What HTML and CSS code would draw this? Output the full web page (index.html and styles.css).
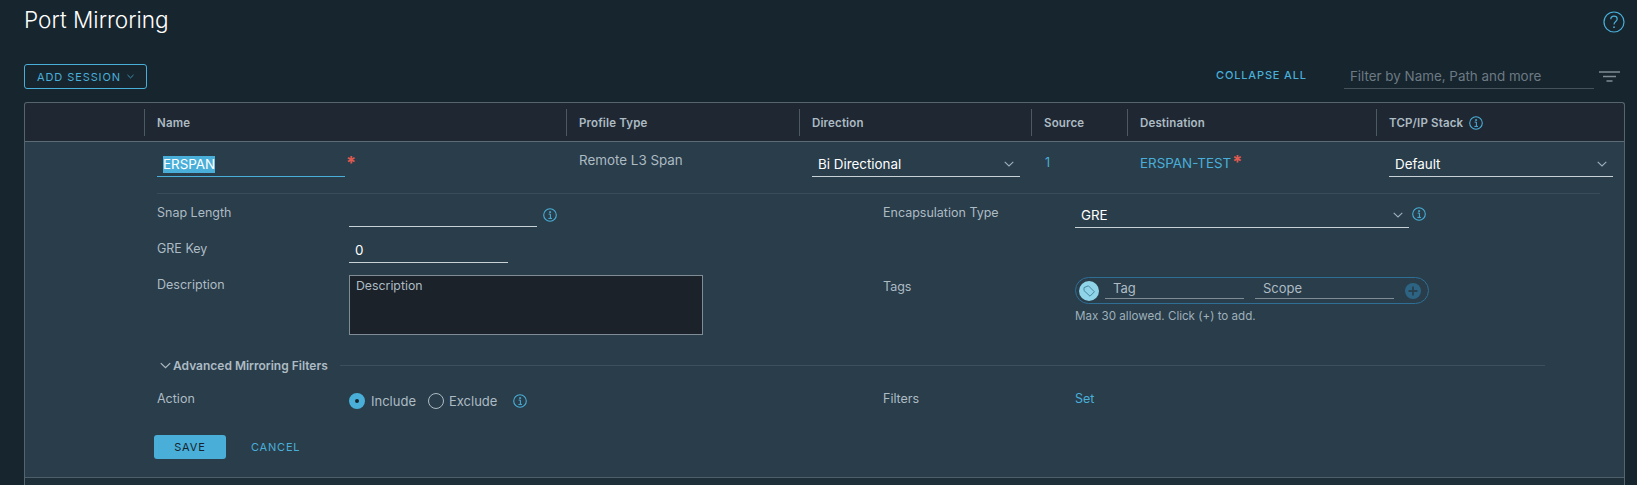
FILE: index.html
```html
<!DOCTYPE html>
<html lang="en">
<head>
    <meta charset="UTF-8">
    <meta name="viewport" content="width=device-width, initial-scale=1.0">
    <title>Port Mirroring</title>
    <link rel="stylesheet" href="styles.css">
</head>
<body>
    <svg class="defs" width="0" height="0">
        <symbol id="info" viewBox="0 0 14 14">
            <circle cx="7" cy="7" r="6.3" fill="none" stroke="currentColor" stroke-width="1.1"/>
            <path d="M5.6 6.1H7.4V10.2M5.4 10.4H9M6.6 3.6H7.6V4.6H6.6Z" fill="none" stroke="currentColor" stroke-width="1"/>
        </symbol>
        <symbol id="chev" viewBox="0 0 10 6">
            <path d="M0.7 0.8L5 5L9.3 0.8" fill="none" stroke="currentColor" stroke-width="1.1"/>
        </symbol>
    </svg>

    <div class="title-row">
        <h1>Port Mirroring</h1>
        <svg class="help" viewBox="0 0 22 22">
            <circle cx="11" cy="11" r="10" fill="none" stroke="currentColor" stroke-width="1.2"/>
            <path d="M7.8 8.3C7.8 6.3 9.3 5.2 11 5.2C12.8 5.2 14.2 6.4 14.2 8C14.2 10.4 11 10.6 11 13.4" fill="none" stroke="currentColor" stroke-width="1.2"/>
            <circle cx="11" cy="16.2" r="0.9" fill="currentColor"/>
        </svg>
    </div>

    <div class="toolbar">
        <button class="btn-outline" type="button">ADD SESSION <svg class="chev-sm"><use href="#chev"/></svg></button>
        <a class="collapse-all">COLLAPSE ALL</a>
        <input class="filter-input" type="text" placeholder="Filter by Name, Path and more">
        <svg class="filter-icon" viewBox="0 0 21 11">
            <path d="M0 1H21M4 5.5H17M7.5 10H13.5" fill="none" stroke="currentColor" stroke-width="1.4"/>
        </svg>
    </div>

    <div class="panel">
        <div class="cols head">
            <div></div>
            <div class="head-cell">Name</div>
            <div class="head-cell">Profile Type</div>
            <div class="head-cell">Direction</div>
            <div class="head-cell">Source</div>
            <div class="head-cell">Destination</div>
            <div class="head-cell">TCP/IP Stack <svg class="info head-info"><use href="#info"/></svg></div>
        </div>

        <div class="editor">
            <div class="cols row">
                <div></div>
                <div class="cell name-cell">
                    <div class="field name-field"><span class="selected">ERSPAN</span></div>
                    <span class="star">*</span>
                </div>
                <div class="cell profile-cell">Remote L3 Span</div>
                <div class="cell">
                    <div class="field direction-field">Bi Directional <svg class="chev"><use href="#chev"/></svg></div>
                </div>
                <div class="cell source-cell"><a>1</a></div>
                <div class="cell dest-cell"><a>ERSPAN-TEST</a><span class="star">*</span></div>
                <div class="cell">
                    <div class="field stack-field">Default <svg class="chev"><use href="#chev"/></svg></div>
                </div>
            </div>

            <div class="detail">
                <div class="form-grid">
                    <label class="lbl">Snap Length</label>
                    <div class="val">
                        <input class="field snap-input" type="text">
                        <svg class="info snap-info"><use href="#info"/></svg>
                    </div>
                    <label class="lbl">Encapsulation Type</label>
                    <div class="val">
                        <div class="field encap-field">GRE <svg class="chev"><use href="#chev"/></svg></div>
                        <svg class="info encap-info"><use href="#info"/></svg>
                    </div>

                    <label class="lbl">GRE Key</label>
                    <div class="val"><input class="field gre-input" type="text" value="0"></div>
                    <div></div>
                    <div></div>

                    <label class="lbl">Description</label>
                    <div class="val"><textarea class="desc" placeholder="Description"></textarea></div>
                    <label class="lbl tags-lbl">Tags</label>
                    <div class="val tags-val">
                        <div class="tag-pill">
                            <span class="tag-badge">
                                <svg viewBox="0 0 14 14"><path d="M2 3.6L6.4 1.8L12.4 7.8L8 12.2L2 6.6Z M4.6 4.6H4.7" fill="none" stroke="currentColor" stroke-width="0.9"/></svg>
                            </span>
                            <input class="tag-input" type="text" placeholder="Tag">
                            <input class="tag-input" type="text" placeholder="Scope">
                            <span class="tag-add">
                                <svg viewBox="0 0 16 16"><circle cx="8" cy="8" r="8" fill="currentColor"/><path d="M8 3.5V12.5M3.5 8H12.5" stroke="#29404e" stroke-width="1.8"/></svg>
                            </span>
                        </div>
                        <p class="tag-hint">Max 30 allowed. Click (+) to add.</p>
                    </div>
                </div>

                <div class="section-head">
                    <svg class="section-chev"><use href="#chev"/></svg>
                    <span>Advanced Mirroring Filters</span>
                    <i class="section-line"></i>
                </div>

                <div class="form-grid action-grid">
                    <label class="lbl">Action</label>
                    <div class="radios">
                        <span class="radio checked"></span><span class="radio-text">Include</span>
                        <span class="radio"></span><span class="radio-text">Exclude</span>
                        <svg class="info radio-info"><use href="#info"/></svg>
                    </div>
                    <label class="lbl">Filters</label>
                    <div class="lbl"><a>Set</a></div>
                </div>

                <div class="actions">
                    <button class="btn-primary" type="button">SAVE</button>
                    <a class="cancel">CANCEL</a>
                </div>
            </div>
        </div>
        <div class="next-row"></div>
    </div>
</body>
</html>
```

FILE: styles.css
```css
html, body {
    height: 100%;
}
body {
    margin: 0;
    padding: 0 12px 0 24px;
    background-color: #17252e;
    color: #adbbc4;
    font-family: Inter, "Noto Sans", sans-serif;
    font-size: 12.5px;
    overflow: hidden;
    box-sizing: border-box;
}
a {
    color: #49afd9;
    text-decoration: none;
}
input, textarea {
    font-family: inherit;
    font-size: 13.4px;
    outline: none;
}
.defs {
    position: absolute;
}

/* title */
.title-row {
    display: flex;
    justify-content: space-between;
    height: 64px;
}
h1 {
    margin: 5px 0 0;
    font-size: 22.6px;
    line-height: 30px;
    font-weight: 300;
    color: #fff;
}
.help {
    width: 22px;
    height: 22px;
    margin: 11px 0 0;
    color: #49afd9;
}

/* toolbar */
.toolbar {
    display: flex;
    align-items: flex-start;
    height: 38px;
}
.btn-outline {
    width: 123px;
    height: 25px;
    padding: 0;
    background: transparent;
    border: 1px solid #49afd9;
    border-radius: 3px;
    color: #49afd9;
    font-family: inherit;
    font-size: 11px;
    letter-spacing: 0.9px;
}
.chev-sm {
    width: 7px;
    height: 5px;
    margin: 0 0 2px 2px;
}
.collapse-all {
    margin: 4px 0 0 1069px;
    font-size: 11px;
    font-weight: 500;
    letter-spacing: 0.85px;
    line-height: 15px;
}
.filter-input {
    box-sizing: border-box;
    width: 250px;
    height: 25px;
    margin-left: 37px;
    padding: 0 6px;
    background: transparent;
    border: 0;
    border-bottom: 1px solid #45525b;
    color: #fff;
}
.filter-input::placeholder {
    color: #6d7a83;
}
.filter-icon {
    width: 21px;
    height: 11px;
    margin: 7px 0 0 5px;
    color: #7f8c95;
}

/* panel */
.panel {
    border: 1px solid #55646e;
    border-bottom: 0;
    border-radius: 3px 3px 0 0;
    width: 1601px;
    box-sizing: border-box;
    background-color: #1f2832;
}
.cols {
    display: grid;
    grid-template-columns: 119px 422px 233px 232px 96px 249px 1fr;
}
.head {
    height: 38px;
    border-bottom: 1px solid #5c6b75;
}
.head-cell {
    display: flex;
    align-items: center;
    height: 27px;
    margin-top: 6px;
    padding-left: 12px;
    border-left: 1px solid #4b5963;
    font-size: 11.5px;
    font-weight: 600;
    letter-spacing: 0.15px;
    color: #adbbc4;
}
.info {
    width: 14px;
    height: 14px;
    color: #49afd9;
}
.head-info {
    margin-left: 6px;
}

/* edit row */
.editor {
    background-color: #293d4a;
    border-bottom: 1px solid #4f5f69;
}
.row {
    height: 51px;
}
.cell {
    padding-left: 13px;
    position: relative;
}
.field {
    box-sizing: border-box;
    display: flex;
    align-items: center;
    height: 24px;
    margin-top: 11px;
    padding: 0 6px 1px;
    background: transparent;
    border: 0;
    border-bottom: 1px solid #c7d1d6;
    color: #fff;
    font-size: 13.4px;
}
.name-cell {
    display: flex;
    align-items: flex-start;
}
.name-field {
    width: 188px;
    border-bottom-color: #49afd9;
}
.selected {
    background-color: #49afd9;
    color: #fff;
    line-height: 17px;
}
.star {
    color: #e05a50;
    font-size: 18px;
    line-height: 18px;
    font-weight: 700;
}
.name-cell .star {
    margin: 12px 0 0 1px;
}
.dest-cell .star {
    margin-left: 1px;
}
.profile-cell {
    padding-top: 8px;
    line-height: 20px;
    font-size: 13.4px;
}
.source-cell {
    padding-top: 11px;
    padding-left: 14px;
    line-height: 20px;
}
.dest-cell {
    padding-top: 11px;
    line-height: 20px;
    font-size: 13.4px;
}
.direction-field {
    width: 208px;
}
.stack-field {
    width: 224px;
}
.chev {
    width: 10px;
    height: 6px;
    margin-left: auto;
    color: #9fb0bb;
}

/* detail form */
.detail {
    margin-left: 132px;
    width: 1443px;
    border-top: 1px solid #384b59;
    padding-top: 9px;
    height: 274px;
    box-sizing: content-box;
}
.form-grid {
    display: grid;
    grid-template-columns: 192px 534px 192px 1fr;
    grid-template-rows: 36px 36px 60px;
}
.lbl {
    line-height: 20px;
}
.val {
    display: flex;
    align-items: flex-start;
}
.val .field {
    margin-top: 0;
}
.snap-input {
    width: 188px;
}
.gre-input {
    width: 159px;
}
.snap-info {
    margin: 5px 0 0 6px;
}
.encap-field {
    width: 334px;
    height: 25px !important;
}
.encap-info {
    margin: 4px 0 0 3px;
}
.desc {
    box-sizing: border-box;
    width: 354px;
    height: 60px;
    padding: 1px 6px;
    background-color: #1b2229;
    border: 1px solid #7f8c95;
    border-radius: 0;
    color: #fff;
    font-size: 12.3px;
    resize: none;
    line-height: 18px;
}
.desc::placeholder {
    color: #adbbc4;
}
.tags-lbl {
    margin-top: 2px;
}
.tags-val {
    display: block;
}
.tag-pill {
    box-sizing: border-box;
    display: flex;
    align-items: center;
    width: 354px;
    height: 27px;
    margin-top: 2px;
    padding-left: 3px;
    border: 1px solid #2f6f96;
    border-radius: 14px;
}
.tag-badge {
    display: flex;
    align-items: center;
    justify-content: center;
    flex: none;
    width: 20px;
    height: 20px;
    border-radius: 50%;
    background-color: #8fd4e8;
    color: #3f7f97;
}
.tag-badge svg {
    width: 14px;
    height: 14px;
}
.tag-input {
    box-sizing: border-box;
    width: 139px;
    height: 20px;
    margin: -4px 0 0 6px;
    padding: 0 0 0 8px;
    background: transparent;
    border: 0;
    border-bottom: 1px solid #7f8c95;
    color: #fff;
    font-size: 13px;
}
.tag-input + .tag-input {
    margin-left: 11px;
}
.tag-input::placeholder {
    color: #adbbc4;
}
.tag-add {
    display: flex;
    width: 16px;
    height: 16px;
    margin-left: 11px;
    color: #2d6484;
}
.tag-hint {
    margin: 4px 0 0;
    font-size: 11.6px;
    line-height: 16px;
    color: #9fb0bb;
}

/* advanced filters */
.section-head {
    display: flex;
    align-items: center;
    height: 20px;
    margin-top: 20px;
    padding-left: 3px;
    font-weight: 600;
    font-size: 12px;
}
.section-chev {
    width: 11px;
    height: 7px;
    margin-right: 2px;
    color: #adbbc4;
}
.section-line {
    flex: 1;
    height: 1px;
    margin: 1px 55px 0 12px;
    background-color: #3b4f5c;
}
.action-grid {
    grid-template-rows: 36px;
    margin-top: 14px;
}
.radios {
    display: flex;
    align-items: center;
    height: 24px;
    font-size: 13px;
}
.radio {
    box-sizing: border-box;
    flex: none;
    width: 16px;
    height: 16px;
    border: 1px solid #adbbc4;
    border-radius: 50%;
}
.radio.checked {
    border: 6px solid #49afd9;
    background-color: #17252e;
}
.radio-text {
    margin: 0 12px 0 6px;
}
.radio + .radio-text + .radio + .radio-text {
    margin-left: 5px;
}
.radio-info {
    margin-left: 4px;
}

/* actions */
.actions {
    display: flex;
    align-items: center;
    margin: 10px 0 0 -3px;
}
.btn-primary {
    width: 72px;
    height: 24px;
    padding: 0;
    background-color: #49afd9;
    border: 0;
    border-radius: 3px;
    color: #17242d;
    font-family: inherit;
    font-size: 11px;
    letter-spacing: 0.9px;
}
.cancel {
    margin-left: 25px;
    font-size: 11px;
    letter-spacing: 0.8px;
}
.next-row {
    height: 10px;
    background-color: #1f2f39;
}
```
